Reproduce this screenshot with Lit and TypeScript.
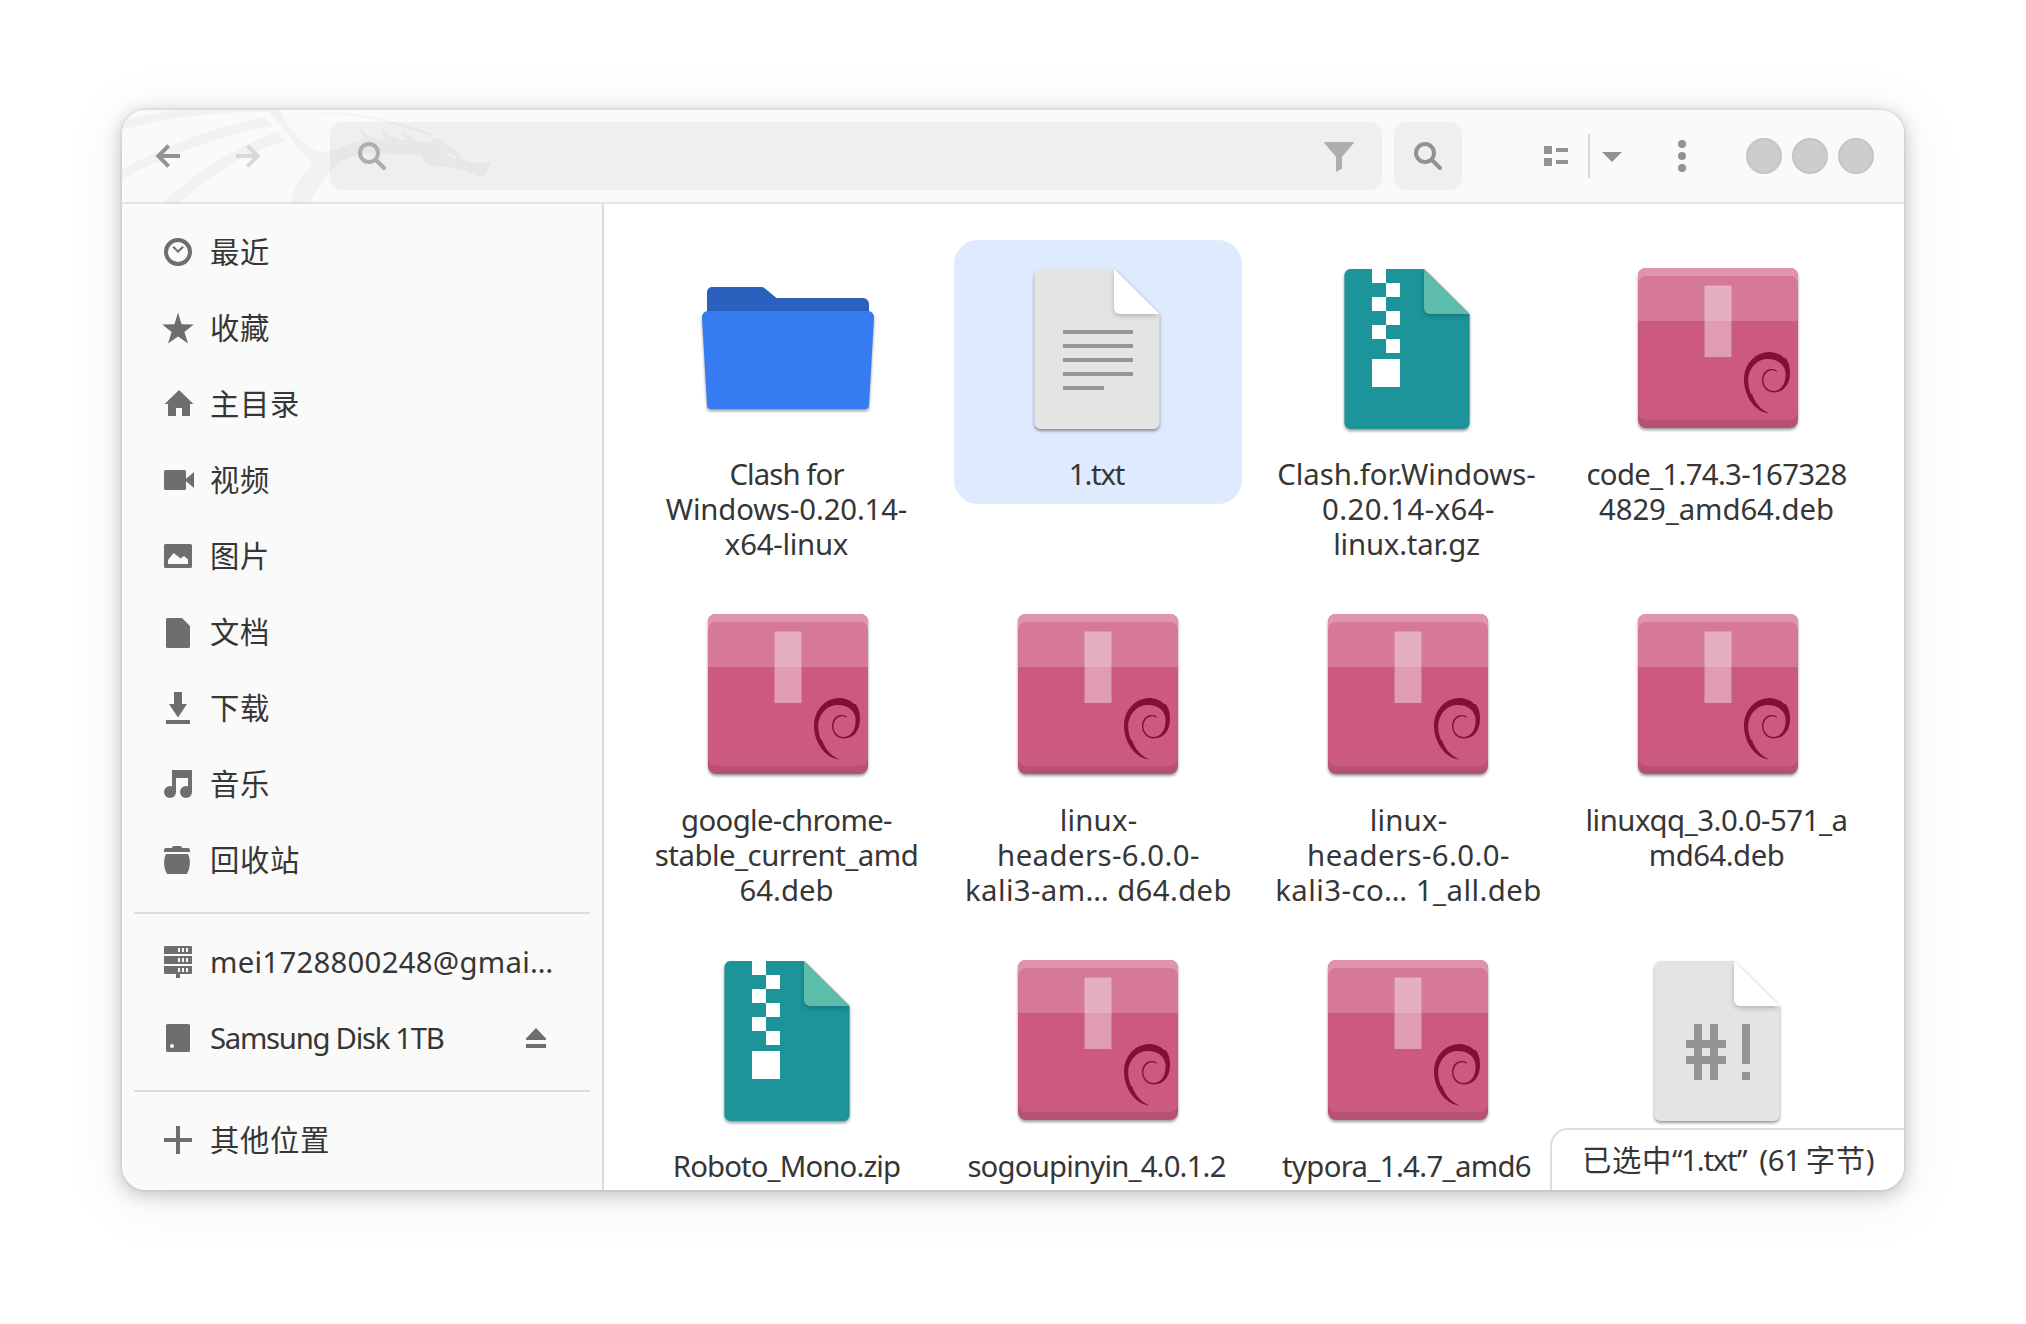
import { LitElement, html, css, svg, TemplateResult } from "lit";
import { customElement, property } from "lit/decorators.js";
import { classMap } from "lit/directives/class-map.js";

type Line = [text: string, tracking: number];
type Kind = "folder" | "text" | "archive" | "deb" | "script";
interface FileItem { kind: Kind; lines: Line[]; selected?: boolean; }
interface Place { icon: string; label: string; tracking: number; eject?: boolean; }

const glyphs: Record<string, TemplateResult> = {
  recent: svg`<circle cx="8" cy="8" r="6" fill="none" stroke="currentColor" stroke-width="2"/><path d="M5.6 5.4 8 7.8l2.6-2.4" fill="none" stroke="currentColor"/>`,
  star: svg`<path d="M8 .3 9.8 6.1 15.9 6.2 11.2 10 13 15.8 8 12.3 3 15.8 4.8 10 .1 6.2 6.2 6.1Z"/>`,
  home: svg`<path d="M8.5 1 15.7 8H14v6h-4v-4H7v4H3V8H1.3Z"/>`,
  video: svg`<rect x="1" y="3" width="11" height="10" rx=".8"/><path d="M11.3 8 16 4v8Z"/>`,
  image: svg`<path fill-rule="evenodd" d="M1.8 2h12.4a.8.8 0 0 1 .8.8v10.4a.8.8 0 0 1-.8.8H1.8a.8.8 0 0 1-.8-.8V2.800A.8.8 0 0 1 1.800 2ZM3 12h10V9.800L11 8 9.300 9.300 5.800 6.500 3 10Z"/>`,
  document: svg`<path d="M2.800 1H10l4 4v10.200a.8.8 0 0 1-.8.8H2.800a.8.8 0 0 1-.8-.8V1.800A.8.8 0 0 1 2.800 1Z"/>`,
  download: svg`<path d="M6 0h4v6h2.500L8 12.800 3.500 6H6ZM2 14h12v2H2Z"/>`,
  music: svg`<path d="M5 1h10v11h-2V5H7v7H5Z"/><circle cx="4" cy="12" r="3"/><circle cx="12" cy="12" r="3"/>`,
  trash: svg`<path d="M1 4V3a1 1 0 0 1 1-1h3a1 1 0 0 1 1-1h3a1 1 0 0 1 1 1h3a1 1 0 0 1 1 1v1ZM2 5h11c1.400 3 1.300 7-.6 10H2.600C.7 12 .6 8 2 5Z"/>`,
  server: svg`<path fill-rule="evenodd" d="M1.500 0h13a.5.5 0 0 1 .5.5V4H1V.5A.5.5 0 0 1 1.500 0ZM8 1v2h1V1Zm2 0v2h1V1Zm2 0v2h1V1ZM1 5h14v4H1Zm7 1v2h1V6Zm2 0v2h1V6Zm2 0v2h1V6ZM1 10h14v3.500a.5.5 0 0 1-.5.5H9v2H7v-2H1.500a.5.5 0 0 1-.5-.5Zm7 1v2h1v-2Zm2 0v2h1v-2Zm2 0v2h1v-2Z"/>`,
  drive: svg`<path fill-rule="evenodd" d="M2.800 1h10.400a.8.8 0 0 1 .8.8v12.400a.8.8 0 0 1-.8.8H2.800a.8.8 0 0 1-.8-.8V1.800A.8.8 0 0 1 2.800 1ZM5 11a1 1 0 1 0 0 2 1 1 0 0 0 0-2Z"/>`,
  eject: svg`<path d="M8 3l5 5.200V9H3V8.200ZM3 11h10v2H3Z"/>`,
  plus: svg`<path d="M7 1h2v6h6v2H9v6H7V9H1V7h6Z"/>`,
  back: svg`<path d="M14 8H3.500M8.300 2.800 3.200 8l5.100 5.200" fill="none" stroke="currentColor" stroke-width="2"/>`,
  forward: svg`<path d="M2 8h10.500M7.700 2.800 12.800 8l-5.100 5.200" fill="none" stroke="currentColor" stroke-width="2"/>`,
  search: svg`<circle cx="6.500" cy="6.500" r="4.500" fill="none" stroke="currentColor" stroke-width="2"/><path d="M10 10l4 4" fill="none" stroke="currentColor" stroke-width="2" stroke-linecap="round"/>`,
  filter: svg`<path d="M.5 1h15v.4L9.500 8.400V14.200L6.500 16V8.400L.5 1.400Z"/>`,
  list: svg`<path d="M2 3h4v4H2ZM8 4h6v2H8ZM2 9h4v4H2ZM8 10h6v2H8Z"/>`,
  caret: svg`<path d="M3 6h10l-5 5Z"/>`,
  more: svg`<circle cx="8" cy="2" r="2"/><circle cx="8" cy="8" r="2"/><circle cx="8" cy="14" r="2"/>`,
};
const glyph = (name: string) => html`<svg class="glyph" viewBox="0 0 16 16">${glyphs[name]}</svg>`;

const sheet = (paper: string, fold: string, content: TemplateResult) => svg`
  <path class="lift" fill=${paper} d="M38 17H112L157.600 62V171a6 6 0 0 1-6 6H38a6 6 0 0 1-5.600-6V23a6 6 0 0 1 5.600-6Z"/>
  ${content}
  <path class="fold" fill=${fold} d="M112 17 157.600 62H118a6 6 0 0 1-6-6Z"/>`;

const art: Record<Kind, TemplateResult> = {
  folder: svg`
    <path fill="#2a61be" d="M15 66V40a5 5 0 0 1 5-5H69a5 5 0 0 1 4 1.500L84.500 46H171a6 6 0 0 1 6 6V66Z"/>
    <path class="lift" fill="#367bf0" d="M16 59H176a6 6 0 0 1 6 6.500L177 153a4 4 0 0 1-4 4H19a4 4 0 0 1-4-4L10 65.500A6 6 0 0 1 16 59Z"/>`,
  text: sheet("#e4e4e4", "#fff", svg`<path fill="#959595" d="M61 78h70v4H61ZM61 92h70v4H61ZM61 106h70v4H61ZM61 120h70v4H61ZM61 134h41v4H61Z"/>`),
  archive: sheet("#1c9499", "#5ebcab", svg`<path fill="#fff" d="M60 17h14v14H60ZM74 31h14v14H74ZM60 45h14v14H60ZM74 59h14v14H74ZM60 73h14v14H60ZM74 87h14v14H74ZM60 107h28v28H60Z"/>`),
  deb: svg`
    <rect class="lift" x="16" y="16" width="160" height="160" rx="8" fill="#b75172"/>
    <path fill="#e094ae" d="M16 60V24a8 8 0 0 1 8-8H168a8 8 0 0 1 8 8V60Z"/>
    <path fill="#d67998" d="M16 69V32a8 8 0 0 1 8-8H168a8 8 0 0 1 8 8V69Z"/>
    <path fill="#cb5a7e" d="M16 69H176V160a8 8 0 0 1-8 8H24a8 8 0 0 1-8-8Z"/>
    <rect x="82.500" y="33.500" width="27" height="71.500" fill="#fff" opacity=".4"/>
    <path fill="#840f34" d="M147.500 161.500C132 160 122 143 122 128 122 112 133 100.500 147 100 153 100 159 102.500 162 106L163.500 106C167 110 168 115 168 121 168 132 162 140.500 152 140.500 145 140.500 140 135 140 128 140 121 145 116.500 150 117 153 117 155 118 155 120 153 118.500 151 118 149.500 118.300 145 119 141.400 123 141.400 128.500 141.400 134 146 139 152 139 159 138.500 164 132 163.600 121 163 113 156 107 146 107 134 107 127 117 126.200 127 126 132 127 137 129 142L130 142C133 151 139 158 147.500 161.500Z"/>`,
  script: sheet("#e4e4e4", "#fff", svg`<g fill="#949494"><rect x="72" y="80" width="8" height="56"/><rect x="88" y="80" width="8" height="56"/><rect x="64" y="96" width="40" height="8"/><rect x="64" y="112" width="40" height="8"/><rect x="120" y="80" width="8" height="40"/><rect x="120" y="128" width="8" height="8"/></g>`),
};

const files: FileItem[] = [
  { kind: "folder", lines: [["Clash for", -0.9], ["Windows-0.20.14-", -0.15], ["x64-linux", -0.24]] },
  { kind: "text", selected: true, lines: [["1.txt", -1.18]] },
  { kind: "archive", lines: [["Clash.for.Windows-", -0.01], ["0.20.14-x64-", 0.44], ["linux.tar.gz", -0.19]] },
  { kind: "deb", lines: [["code_1.74.3-167328", -0.68], ["4829_amd64.deb", -0.08]] },
  { kind: "deb", lines: [["google-chrome-", -0.66], ["stable_current_amd", -0.49], ["64.deb", 0]] },
  { kind: "deb", lines: [["linux-", 0.22], ["headers-6.0.0-", 0.43], ["kali3-am… d64.deb", 0.39]] },
  { kind: "deb", lines: [["linux-", 0.22], ["headers-6.0.0-", 0.43], ["kali3-co… 1_all.deb", 0.45]] },
  { kind: "deb", lines: [["linuxqq_3.0.0-571_a", -0.45], ["md64.deb", -0.49]] },
  { kind: "archive", lines: [["Roboto_Mono.zip", -0.88]] },
  { kind: "deb", lines: [["sogoupinyin_4.0.1.2", -0.82]] },
  { kind: "deb", lines: [["typora_1.4.7_amd6", -0.66]] },
  { kind: "script", lines: [] },
];

const places: Place[][] = [
  [
    { icon: "recent", label: "最近", tracking: 0.67 },
    { icon: "star", label: "收藏", tracking: 0.67 },
    { icon: "home", label: "主目录", tracking: 0.67 },
    { icon: "video", label: "视频", tracking: 0.67 },
    { icon: "image", label: "图片", tracking: 0.67 },
    { icon: "document", label: "文档", tracking: 0.67 },
    { icon: "download", label: "下载", tracking: 0.67 },
    { icon: "music", label: "音乐", tracking: 0.67 },
    { icon: "trash", label: "回收站", tracking: 0.67 },
  ],
  [
    { icon: "server", label: "mei1728800248@gmai…", tracking: 0.27 },
    { icon: "drive", label: "Samsung Disk 1TB", tracking: -1.3, eject: true },
  ],
  [{ icon: "plus", label: "其他位置", tracking: 0.67 }],
];

@customElement("file-tile")
class FileTile extends LitElement {
  @property({ attribute: false }) item!: FileItem;
  static styles = css`
    :host { display: block; }
    .tile { display: flex; flex-direction: column; align-items: center; gap: 13px; padding: 12px 0; border-radius: 24px; }
    .selected { background: #deeafe; }
    .art { display: block; width: 192px; height: 192px; overflow: visible; }
    .lift { filter: drop-shadow(0 2px 1.500px rgba(0, 0, 0, 0.4)); }
    .fold { filter: drop-shadow(0 2px 2.500px rgba(0, 0, 0, 0.22)); }
    .name { display: flex; flex-direction: column; align-items: center; padding-right: 3px; }
    .line { height: 35px; line-height: 35px; white-space: pre; }
    .wide { padding-left: 4px; }
  `;
  render() {
    const { kind, lines, selected } = this.item;
    return html`<div class=${classMap({ tile: true, selected: !!selected })}>
      <svg class="art" viewBox="0 0 192 192">${art[kind]}</svg>
      <div class="name">${lines.map(([text, t]) => html`<span class=${classMap({ line: true, wide: t > 0.1 })} style="letter-spacing:${t}px">${text}</span>`)}</div>
    </div>`;
  }
}

@customElement("app-root")
class AppRoot extends LitElement {
  static styles = css`
    :host {
      display: block; box-sizing: border-box; width: 2026px; height: 1324px; padding: 110px 122px 134px;
      background: #fff; overflow: hidden; color: #363636;
      font: 29.33px "Noto Sans", "Noto Sans CJK SC", sans-serif;
    }
    .window {
      position: relative; display: grid; grid-template: 94px 986px / 482px 1300px; height: 1080px;
      border-radius: 24px; background: #fff;
      box-shadow: 0 0 0 2px rgba(0, 0, 0, 0.045), 0 4px 16px 3px rgba(0, 0, 0, 0.17), 0 8px 60px 8px rgba(0, 0, 0, 0.06);
      overflow: hidden;
    }
    .header {
      grid-column: 1 / 3; position: relative; display: flex; align-items: center; box-sizing: border-box;
      padding-left: 30px; border-bottom: 2px solid #e5e5e5; background: #fafafa; color: #929292;
    }
    .dragon { position: absolute; left: -12px; top: -15px; width: 500px; height: 108px; fill: rgba(0, 0, 0, 0.032); }
    .glyph { display: block; flex: none; width: 32px; height: 32px; fill: currentColor; }
    .nav { position: relative; display: flex; gap: 48px; }
    .off { color: #d9d9d9; }
    .entry, .find { position: relative; box-sizing: border-box; height: 68px; border-radius: 12px; background: rgba(0, 0, 0, 0.045); display: flex; align-items: center; }
    .entry { width: 1052px; margin-left: 66px; padding: 0 27px 0 26px; justify-content: space-between; color: #aeaeae; }
    .find { width: 68px; margin-left: 12px; justify-content: center; }
    .view { display: flex; align-items: center; margin-left: 78px; }
    .rule { width: 2px; height: 44px; margin: 0 6px 0 16px; background: #d9d9d9; }
    .more { margin-left: 38px; }
    .controls { display: flex; gap: 10px; margin-left: 48px; }
    .dot { box-sizing: border-box; width: 36px; height: 36px; border-radius: 50%; border: 2px solid #c5c5c5; background: #cdcdcd; }
    .side { box-sizing: border-box; border-right: 2px solid #dcdcdc; background: #fafafa; }
    .group { padding: 10px 0 14px; }
    .sep { height: 2px; margin: 0 12px; background: #dcdcdc; }
    .place { display: flex; align-items: center; height: 76px; padding: 0 50px 0 40px; gap: 16px; }
    .place > .glyph { color: #6e6e6e; }
    .label { flex: 1; white-space: nowrap; line-height: 40px; }
    .files {
      display: grid; grid-template-columns: repeat(4, 288px); grid-auto-rows: 346px; column-gap: 22px;
      align-items: start; padding: 36px 0 0 40px; overflow: hidden; box-sizing: border-box; height: 986px;
    }
    .status {
      position: absolute; right: 0; bottom: 0; box-sizing: border-box; width: 354px; height: 62px;
      padding-left: 30px; border: solid #dedede; border-width: 2px 0 0 2px; border-radius: 18px 0 0 0; background: #fff;
      display: flex; align-items: center; white-space: nowrap; line-height: 40px;
    }
    .cjk { letter-spacing: 0.67px; }
    .latin { letter-spacing: -1.24px; }
    .size { margin-left: 13px; margin-right: 5px; letter-spacing: -0.3px; }
  `;

  private dragon() {
    return html`<svg class="dragon" viewBox="0 0 1500 324">
      <path d="M52 75C100 62 150 50 215 44H475L478 50C330 48 150 72 36 104L44 84Z"/>
      <path d="M36 222C150 160 310 95 465 65L488 93C330 120 160 185 36 252Z"/>
      <path d="M152 327C250 240 370 155 503 110L526 138C410 170 290 250 205 327Z"/>
      <path fill-rule="evenodd" d="M470 44H508C540 110 590 165 640 170 680 172 710 142 766 134 757 125 751 112 748 97 765 120 790 135 828 134 820 125 815 112 813 97 830 120 860 135 893 136 884 128 879 118 877 107 895 125 920 140 950 144 962 140 972 131 985 128L1053 180 1050 188C1080 205 1115 208 1147 202L1117 250C1070 225 1030 212 985 217 955 213 940 200 935 180 860 180 800 172 750 178 680 190 630 250 603 327H540C550 280 575 235 605 205ZM1000 163C1010 180 1025 190 1042 191L1034 181C1020 178 1010 172 1000 163Z"/>
      <path d="M618 50C740 50 860 75 970 118L958 124C860 85 740 56 618 52Z"/>
    </svg>`;
  }

  render() {
    return html`<div class="window">
      <div class="header">
        ${this.dragon()}
        <div class="nav">${glyph("back")}<span class="off">${glyph("forward")}</span></div>
        <div class="entry">${glyph("search")}${glyph("filter")}</div>
        <div class="find">${glyph("search")}</div>
        <div class="view">${glyph("list")}<span class="rule"></span>${glyph("caret")}</div>
        <div class="more">${glyph("more")}</div>
        <div class="controls"><span class="dot"></span><span class="dot"></span><span class="dot"></span></div>
      </div>
      <div class="side">
        ${places.map((group, i) => html`${i ? html`<div class="sep"></div>` : null}<div class="group">
          ${group.map((p) => html`<div class="place">${glyph(p.icon)}<span class="label" style="letter-spacing:${p.tracking}px">${p.label}</span>${p.eject ? glyph("eject") : null}</div>`)}
        </div>`)}
      </div>
      <div class="files">${files.map((f) => html`<file-tile .item=${f}></file-tile>`)}</div>
      <div class="status"><span class="cjk">已选中</span><span class="latin">“1.txt”</span><span class="size">(61</span><span class="cjk">字节)</span></div>
    </div>`;
  }
}
